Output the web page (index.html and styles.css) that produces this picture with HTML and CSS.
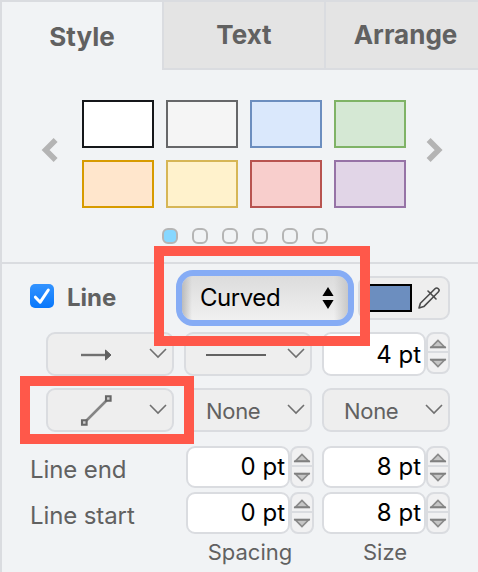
FILE: index.html
```html
<!DOCTYPE html>
<html lang="en">
<head>
<meta charset="utf-8">
<title>Format panel</title>
<link rel="stylesheet" href="styles.css">
</head>
<body>
<svg class="defs" width="0" height="0" aria-hidden="true">
  <symbol id="chev" viewBox="0 0 18 11"><path d="M1 1l8 8 8-8" fill="none" stroke="#707070" stroke-width="1.6"/></symbol>
  <symbol id="up" viewBox="0 0 18 10"><path d="M9 1.4L2.5 8h13z" fill="#c6c6c6" stroke="#8a8a8a" stroke-width="1.6"/><path d="M1 8.4h16" stroke="#808080" stroke-width="1.8"/></symbol>
  <symbol id="down" viewBox="0 0 18 10"><path d="M9 8.6L2.5 2h13z" fill="#c6c6c6" stroke="#8a8a8a" stroke-width="1.6"/><path d="M1 1.6h16" stroke="#808080" stroke-width="1.8"/></symbol>
</svg>
<main class="panel">
  <nav class="tabs">
    <div class="tab active"><span class="t-style">Style</span></div>
    <div class="tab"><span class="t-text">Text</span></div>
    <div class="tab"><span class="t-arrange">Arrange</span></div>
  </nav>
  <section class="palette">
    <svg class="arrow" width="18" height="26" viewBox="0 0 18 26"><path d="M15.6 3L5.6 13l10 10" fill="none" stroke="#b4b4b4" stroke-width="5.6"/></svg>
    <div class="swatches">
      <i class="sw white"></i><i class="sw gray"></i><i class="sw blue"></i><i class="sw green"></i>
      <i class="sw orange"></i><i class="sw yellow"></i><i class="sw red"></i><i class="sw purple"></i>
    </div>
    <svg class="arrow" width="18" height="26" viewBox="0 0 18 26"><path d="M2.6 3l10 10-10 10" fill="none" stroke="#b4b4b4" stroke-width="5.6"/></svg>
  </section>
  <div class="dots"><i class="on"></i><i></i><i></i><i></i><i></i><i></i></div>
  <section class="line">
    <div class="row head">
      <svg class="check" width="24" height="24" viewBox="0 0 24 24"><defs><linearGradient id="cb" x2="0" y2="1"><stop stop-color="#3393ff"/><stop offset="1" stop-color="#0877fb"/></linearGradient></defs><rect width="24" height="24" rx="5" fill="url(#cb)"/><path d="M5.4 13.2l4.8 5L18.3 6" fill="none" stroke="#fff" stroke-width="3" stroke-linecap="round" stroke-linejoin="round"/></svg>
      <b class="title">Line</b>
      <div class="select"><span>Curved</span><svg width="12" height="22" viewBox="0 0 12 22"><path d="M6 0l5.6 9H.4zM6 22L.4 13h11.2z"/></svg></div>
      <div class="color"><i></i><svg width="24" height="24" viewBox="0 0 24 24" fill="none" stroke="#4b4b4b" stroke-width="1.6" stroke-linejoin="round" stroke-linecap="round"><path d="M14 6.7L3.4 17.2 2 22l4.8-1.4L17.3 10"/><path d="M11 5l8 8M14 6.7l4-4a2.3 2.3 0 0 1 3.3 3.3l-4 4"/></svg></div>
    </div>
    <div class="row mid">
      <div class="btn"><svg width="32" height="14" viewBox="0 0 32 14"><path d="M1 8h26" stroke="#707070" stroke-width="2.4"/><path d="M25.5 3v10l5.5-5z" fill="#606060" stroke="#606060"/></svg><svg class="chev"><use href="#chev"/></svg></div>
      <div class="btn solid"><i></i><svg class="chev"><use href="#chev"/></svg></div>
      <div class="num"><span>4 pt</span></div><div class="step"><svg><use href="#up"/></svg><svg><use href="#down"/></svg></div>
    </div>
    <div class="row mid third">
      <div class="btn"><svg width="32" height="32" viewBox="0 0 32 32" fill="none" stroke="#666" stroke-width="2.1"><path d="M6 27L27 6" stroke="#858585" stroke-width="2.5"/><path d="M2 26.2h4.6v4.6H2zM26 2.2h4.6v4.6H26z" fill="#ccc"/></svg><svg class="chev"><use href="#chev"/></svg></div>
      <div class="btn none"><span>None</span><svg class="chev"><use href="#chev"/></svg></div>
      <div class="btn none last"><span>None</span><svg class="chev"><use href="#chev"/></svg></div>
    </div>
    <div class="row ends">
      <span class="label">Line end</span>
      <div class="num"><span>0 pt</span></div><div class="step"><svg><use href="#up"/></svg><svg><use href="#down"/></svg></div>
      <div class="num gap"><span>8 pt</span></div><div class="step"><svg><use href="#up"/></svg><svg><use href="#down"/></svg></div>
    </div>
    <div class="row ends">
      <span class="label">Line start</span>
      <div class="num"><span>0 pt</span></div><div class="step"><svg><use href="#up"/></svg><svg><use href="#down"/></svg></div>
      <div class="num gap"><span>8 pt</span></div><div class="step"><svg><use href="#up"/></svg><svg><use href="#down"/></svg></div>
    </div>
    <div class="captions"><span>Spacing</span><span>Size</span></div>
  </section>
  <div class="mark mark-select"></div>
  <div class="mark mark-waypoint"></div>
</main>
</body>
</html>
```

FILE: styles.css
```css
* { box-sizing: border-box; }
body {
  margin: 0;
  font-family: Inter, "Liberation Sans", sans-serif;
  font-size: 24px;
  color: #616161;
  white-space: nowrap;
}
i { display: block; }
svg { display: block; flex: none; }
.defs { position: absolute; }
.panel {
  position: relative;
  width: 478px;
  height: 572px;
  overflow: hidden;
  background: #f1f3f5;
  border: solid #dadce0;
  border-width: 2px 0 0 2px;
}

.tabs { display: grid; grid-template-columns: 160px 162px 154px; height: 68px; }
.tab {
  display: flex;
  align-items: center;
  justify-content: center;
  background: #e4e4e4;
  border: solid #dadce0;
  border-width: 0 0 2px 2px;
  font-size: 26px;
  font-weight: 700;
  padding-bottom: 1px;
}
.tab.active { background: none; border: 0; padding: 1px 0 0; }
.t-arrange { margin-left: 7px; }

.palette { display: flex; justify-content: space-between; align-items: center; height: 108px; margin: 30px 34px 0 38px; }
.arrow { margin-top: -8px; }
.swatches { display: grid; grid-template-columns: repeat(4, 72px); grid-auto-rows: 48px; gap: 12px; margin-left: 4px; }
.sw { border: 2px solid; }
.white { background: #fff; border-color: #15171a; }
.gray { background: #f5f5f5; border-color: #666769; }
.blue { background: #dae8fc; border-color: #6c8ebf; }
.green { background: #d5e8d4; border-color: #7fb366; }
.orange { background: #ffe6cc; border-color: #d79b00; }
.yellow { background: #fff2cc; border-color: #d6b656; }
.red { background: #f8cecc; border-color: #b85450; }
.purple { background: #e1d5e7; border-color: #9673a6; }

.dots { display: flex; gap: 14px; margin: 20px 0 18px 160px; }
.dots i { width: 16px; height: 16px; border: 2px solid #b5b5b5; border-radius: 6px; }
.dots .on { background: #86d7ff; }

.line { border-top: 2px solid #dadce0; padding-top: 6px; }
.row { display: flex; }
.head { height: 56px; align-items: center; padding-left: 28px; }
.check { margin-top: -4px; }
.title { width: 109px; margin: -2px 0 0 13px; }
.select {
  display: flex;
  align-items: center;
  justify-content: space-between;
  width: 178px;
  height: 56px;
  padding: 0 14px 0 18px;
  border: 6px solid #86acf5;
  border-radius: 17px;
  background: linear-gradient(90deg, #bbb 0, transparent 10px, transparent calc(100% - 14px), #c8c8c8 100%) padding-box, linear-gradient(#dcdcdc, #f0f0f0) padding-box;
  color: #000;
}
.select span { letter-spacing: -0.45px; margin-top: -2px; }
.color {
  display: flex;
  align-items: center;
  justify-content: space-between;
  width: 92px;
  height: 44px;
  margin-left: 4px;
  padding: 0 7px 0 6px;
  background: #eee;
  border: 2px solid #dadce0;
  border-radius: 9px;
}
.color i { width: 46px; height: 28px; background: #6c8ebf; border: 2px solid #000; }

.mid { height: 44px; margin: 6px 0 0 44px; }
.mid.third { margin-top: 12px; }
.btn {
  display: flex;
  align-items: center;
  justify-content: space-between;
  width: 128px;
  height: 44px;
  margin-right: 10px;
  padding: 0 5px 0 32px;
  background: #eee;
  border: 2px solid #dadce0;
  border-radius: 9px;
}
.btn.solid { padding-left: 20px; }
.btn.solid i { width: 60px; height: 2px; background: #626262; margin-top: 2px; }
.btn.none { padding-left: 20px; font-size: 22px; letter-spacing: -0.3px; }
.btn.none span { margin-top: 2px; }
.btn.none.last { margin: 0; padding-left: 20px; }
.chev { width: 18px; height: 11px; margin-top: -2px; }
.num {
  display: flex;
  align-items: center;
  justify-content: flex-end;
  width: 104px;
  padding-right: 3px;
  background: #fff;
  border: 2px solid #dadce0;
  border-radius: 9px;
  color: #000;
}
.step { display: grid; grid-template-rows: 1fr 1fr; width: 24px; height: 42px; border: 2px solid #dadce0; border-radius: 8px; background: #f1f1f2; justify-items: center; align-items: center; }
.step svg { width: 18px; height: 10px; }
.step::before { content: ""; grid-area: 1 / 1; align-self: end; width: 20px; height: 2px; background: #dadce0; }
.step svg:first-of-type { grid-area: 1 / 1; }
.step svg:last-of-type { grid-area: 2 / 1; }

.ends { height: 42px; margin: 14px 0 0 28px; align-items: stretch; }
.ends + .ends { margin-top: 4px; }
.ends .num { padding-bottom: 1px; }
.label { width: 156px; line-height: 47px; letter-spacing: -0.1px; }
.gap { margin-left: 8px; }
.captions { display: flex; margin: 2px 0 0 184px; font-size: 22px; line-height: 32px; text-align: center; }
.captions span:first-child { width: 128px; }
.captions span:last-child { width: 142px; }

.mark { position: absolute; border: 10px solid #ff584a; }
.mark-select { left: 152px; top: 244px; width: 216px; height: 100px; }
.mark-waypoint { left: 18px; top: 374px; width: 174px; height: 68px; }
```
